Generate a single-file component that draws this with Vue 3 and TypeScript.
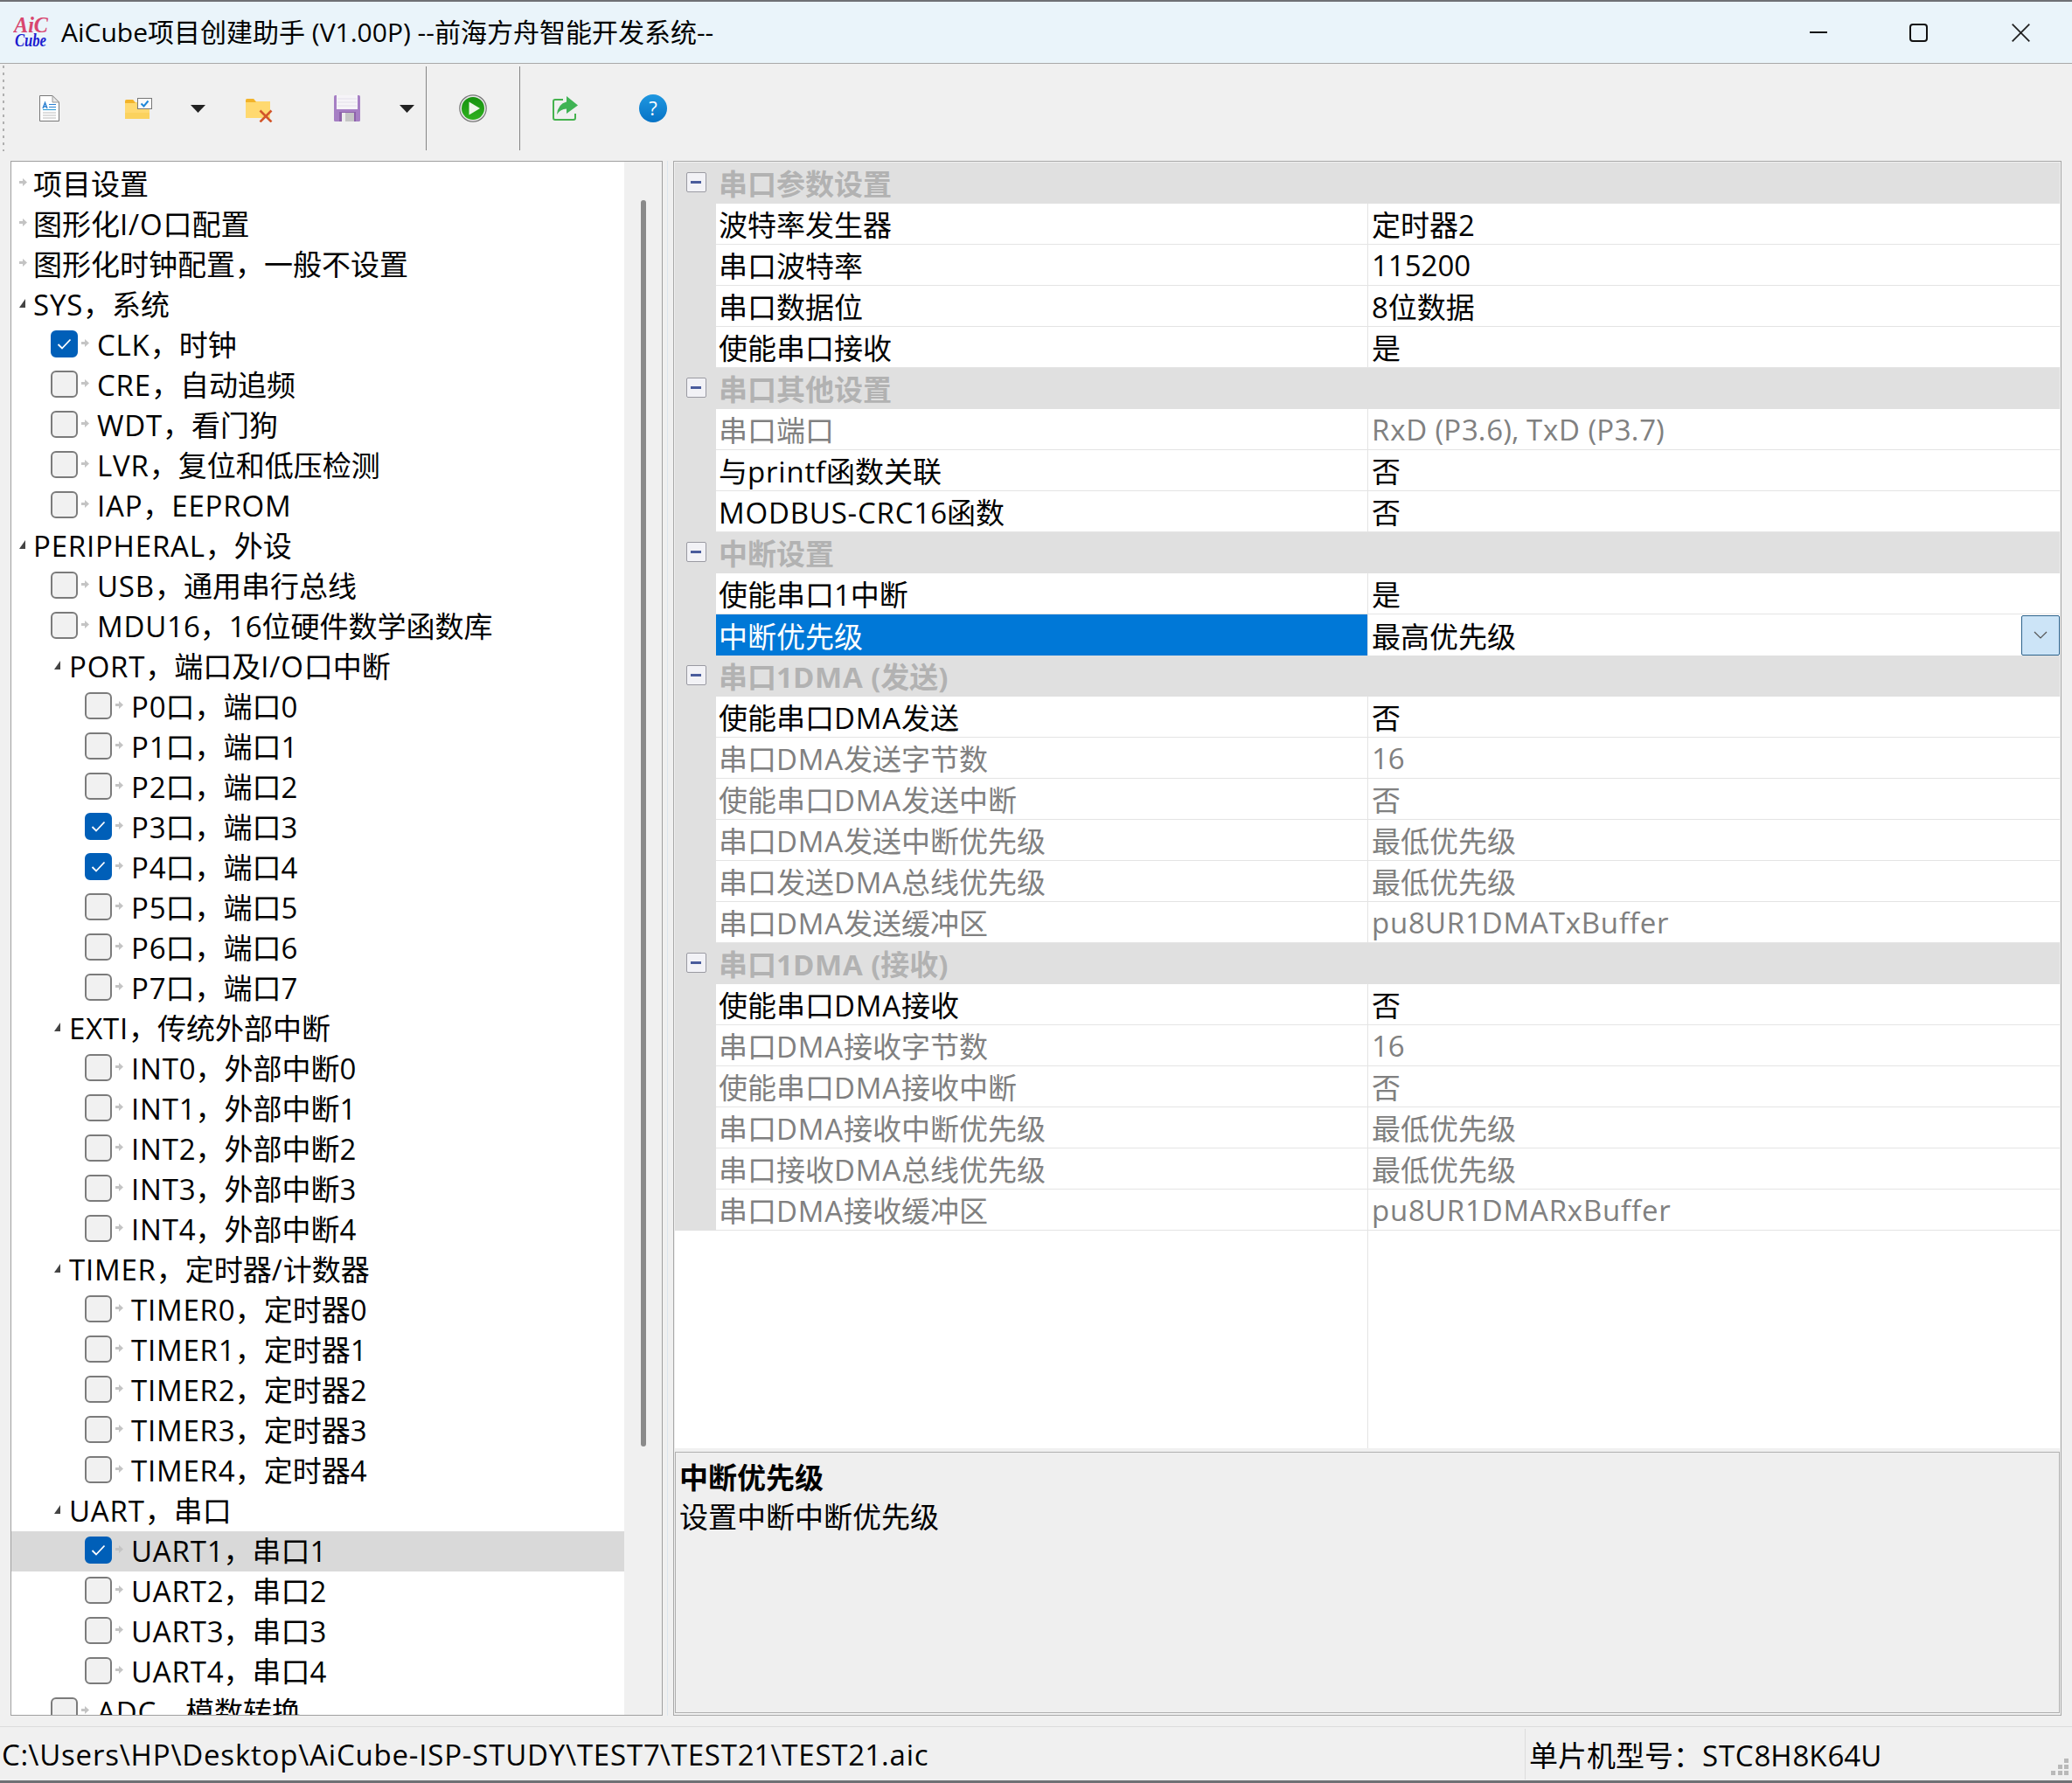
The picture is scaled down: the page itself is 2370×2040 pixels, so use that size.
<script setup lang="ts">
import { h, type FunctionalComponent } from "vue";

interface TreeRow {
  label: string;
  level: number;
  // head = no checkbox, expanded heads get the small dark triangle
  head?: boolean;
  open?: boolean;
  checked?: boolean;
  selected?: boolean;
}

interface PropRow {
  label: string;
  value: string;
  off?: boolean;
  selected?: boolean;
}

interface PropGroup {
  title: string;
  rows: PropRow[];
}

const COMMA = "\uFF0C";
const COLON = "\uFF1A";

// the original UI font sets latin letters a little wider than Open Sans does,
// so letter runs get their own span with some tracking
const Txt: FunctionalComponent<{ text: string }> = (props) =>
  props.text
    .split(/([A-Za-z\-/\\.]+)/)
    .filter((part) => part !== "")
    .map((part) => h("span", { class: /^[A-Za-z\-/\\.]+$/.test(part) ? "lat" : undefined }, part));
Txt.props = ["text"];

function leaves(names: string[], level: number, checked: number[] = []): TreeRow[] {
  return names.map((label, i) => ({ label: label.replace("|", COMMA), level, checked: checked.includes(i) }));
}

function head(label: string, level: number, open = false): TreeRow {
  return { label: label.replace("|", COMMA), level, head: true, open };
}

const tree: TreeRow[] = [
  head("项目设置", 0),
  head("图形化I/O口配置", 0),
  head("图形化时钟配置|一般不设置", 0),
  head("SYS|系统", 0, true),
  ...leaves(["CLK|时钟", "CRE|自动追频", "WDT|看门狗", "LVR|复位和低压检测", "IAP|EEPROM"], 1, [0]),
  head("PERIPHERAL|外设", 0, true),
  ...leaves(["USB|通用串行总线", "MDU16|16位硬件数学函数库"], 1),
  head("PORT|端口及I/O口中断", 1, true),
  ...leaves(
    ["P0口|端口0", "P1口|端口1", "P2口|端口2", "P3口|端口3", "P4口|端口4", "P5口|端口5", "P6口|端口6", "P7口|端口7"],
    2,
    [3, 4]
  ),
  head("EXTI|传统外部中断", 1, true),
  ...leaves(["INT0|外部中断0", "INT1|外部中断1", "INT2|外部中断2", "INT3|外部中断3", "INT4|外部中断4"], 2),
  head("TIMER|定时器/计数器", 1, true),
  ...leaves(["TIMER0|定时器0", "TIMER1|定时器1", "TIMER2|定时器2", "TIMER3|定时器3", "TIMER4|定时器4"], 2),
  head("UART|串口", 1, true),
  { ...leaves(["UART1|串口1"], 2)[0], checked: true, selected: true },
  ...leaves(["UART2|串口2", "UART3|串口3", "UART4|串口4"], 2),
  ...leaves(["ADC|模数转换"], 1),
];

const groups: PropGroup[] = [
  {
    title: "串口参数设置",
    rows: [
      { label: "波特率发生器", value: "定时器2" },
      { label: "串口波特率", value: "115200" },
      { label: "串口数据位", value: "8位数据" },
      { label: "使能串口接收", value: "是" },
    ],
  },
  {
    title: "串口其他设置",
    rows: [
      { label: "串口端口", value: "RxD (P3.6), TxD (P3.7)", off: true },
      { label: "与printf函数关联", value: "否" },
      { label: "MODBUS-CRC16函数", value: "否" },
    ],
  },
  {
    title: "中断设置",
    rows: [
      { label: "使能串口1中断", value: "是" },
      { label: "中断优先级", value: "最高优先级", selected: true },
    ],
  },
  {
    title: "串口1DMA (发送)",
    rows: [
      { label: "使能串口DMA发送", value: "否" },
      { label: "串口DMA发送字节数", value: "16", off: true },
      { label: "使能串口DMA发送中断", value: "否", off: true },
      { label: "串口DMA发送中断优先级", value: "最低优先级", off: true },
      { label: "串口发送DMA总线优先级", value: "最低优先级", off: true },
      { label: "串口DMA发送缓冲区", value: "pu8UR1DMATxBuffer", off: true },
    ],
  },
  {
    title: "串口1DMA (接收)",
    rows: [
      { label: "使能串口DMA接收", value: "否" },
      { label: "串口DMA接收字节数", value: "16", off: true },
      { label: "使能串口DMA接收中断", value: "否", off: true },
      { label: "串口DMA接收中断优先级", value: "最低优先级", off: true },
      { label: "串口接收DMA总线优先级", value: "最低优先级", off: true },
      { label: "串口DMA接收缓冲区", value: "pu8UR1DMARxBuffer", off: true },
    ],
  },
];

const chipText = `单片机型号${COLON}STC8H8K64U`;
</script>

<template>
  <div class="window">
    <header class="titlebar">
      <svg class="logo" width="42" height="46" viewBox="0 -5 42 46">
        <text x="1" y="18" class="logo-aic" textLength="39" lengthAdjust="spacingAndGlyphs">AiC</text>
        <text x="2" y="34" class="logo-cube" textLength="36" lengthAdjust="spacingAndGlyphs">Cube</text>
      </svg>
      <span class="title-text">AiCube项目创建助手 (V1.00P) --前海方舟智能开发系统--</span>
      <div class="window-btns">
        <svg class="win-min" width="20" height="2" viewBox="0 0 20 2"><rect width="20" height="2" fill="#111" /></svg>
        <svg class="win-max" width="21" height="21" viewBox="0 0 21 21"><rect x="1" y="1" width="19" height="19" rx="3" fill="none" stroke="#111" stroke-width="2" /></svg>
        <svg class="win-close" width="21" height="21" viewBox="0 0 21 21"><path d="M.7.7 20.3 20.3M20.3.7.7 20.3" fill="none" stroke="#222" stroke-width="1.8" /></svg>
      </div>
    </header>

    <div class="toolbar">
      <div class="grip"></div>
      <svg class="tb-doc" width="23" height="30" viewBox="0 0 23 30">
        <path d="M.5.5H15L22.5 8V29.5H.5Z" fill="#fff" stroke="#777" />
        <path d="M15 .5V8H22.5Z" fill="#e8e8e8" stroke="#999" />
        <path d="M4 15 6.5 8.5 9 15M5 13H8" fill="none" stroke="#2a7fd0" stroke-width="1.4" />
        <path d="M11 10.5H19M11 13.5H19" stroke="#2a7fd0" stroke-width="1.2" />
        <path d="M4 16.5H19" stroke="#35a0d8" stroke-width="1.2" />
        <path d="M4 20H19M4 23H19M4 26H19" stroke="#bbb" stroke-width="1.2" />
      </svg>
      <svg class="tb-open" width="31" height="25" viewBox="0 0 31 25">
        <path d="M0 4Q0 2 2 2H9L12 5H28V24H0Z" fill="#ffd970" />
        <path d="M0 4Q0 2 2 2H9L12 6H0Z" fill="#f2b32a" />
        <path d="M0 17H28V24H0Z" fill="#fbd25e" />
        <rect x="14.5" y=".5" width="16" height="12" fill="#fafafa" stroke="#777" />
        <path d="M18.5 6.5 21.5 9.5 26.5 3.5" fill="none" stroke="#1e86d8" stroke-width="2" />
      </svg>
      <svg class="tb-arrow-a" width="17" height="9" viewBox="0 0 17 9"><path d="M0 0H17L8.5 9Z" fill="#222" /></svg>
      <svg class="tb-close" width="31" height="27" viewBox="0 0 31 27">
        <path d="M0 2Q0 0 2 0H9L12 3H28V22H0Z" fill="#ffd970" />
        <path d="M0 2Q0 0 2 0H9L12 4H0Z" fill="#f2b32a" />
        <path d="M16.5 13.5 29.5 26.5M29.5 13.5 16.5 26.5" stroke="#d2552a" stroke-width="2.6" />
      </svg>
      <svg class="tb-save" width="30" height="30" viewBox="0 0 30 30">
        <path d="M1.5 0H28.5Q30 0 30 1.5V28.5Q30 30 28.5 30H1.5Q0 30 0 28.5V1.5Q0 0 1.5 0Z" fill="#a67fc4" />
        <rect x="3" y="0" width="24" height="16" fill="#f6f4f8" />
        <path d="M4 4H26M4 8H26M4 12H26" stroke="#e4e0ea" stroke-width="1" />
        <rect x="6" y="19" width="19" height="11" fill="#8d62aa" />
        <rect x="13" y="20" width="10" height="10" fill="#c6c6c6" />
        <rect x="9" y="20" width="4" height="10" fill="#ededed" />
      </svg>
      <svg class="tb-arrow-b" width="17" height="9" viewBox="0 0 17 9"><path d="M0 0H17L8.5 9Z" fill="#222" /></svg>
      <div class="tb-sep tb-sep-a"></div>
      <svg class="tb-run" width="32" height="32" viewBox="0 0 32 32">
        <defs>
          <linearGradient id="runFill" x1="0" y1="0" x2="0" y2="1">
            <stop offset="0" stop-color="#16920f" />
            <stop offset="1" stop-color="#2fb01e" />
          </linearGradient>
        </defs>
        <circle cx="16" cy="16" r="15.2" fill="#e8e8e8" stroke="#777" stroke-width="1.2" />
        <circle cx="16" cy="16" r="13" fill="url(#runFill)" />
        <path d="M11.5 8.5 24 16 11.5 23.5Z" fill="#eef5ea" />
      </svg>
      <div class="tb-sep tb-sep-b"></div>
      <svg class="tb-export" width="29" height="28" viewBox="0 0 29 28">
        <path d="M12 4H3Q1 4 1 6V25Q1 27 3 27H24Q26 27 26 25V20" fill="none" stroke="#45b24e" stroke-width="2" />
        <path d="M16 0 29 10.5 16 20V14.5Q9 14.5 5 21 6 9 16 6.5Z" fill="#3fb354" />
      </svg>
      <svg class="tb-help" width="32" height="32" viewBox="0 0 32 32">
        <defs>
          <linearGradient id="helpFill" x1="0" y1="0" x2="0" y2="1">
            <stop offset="0" stop-color="#1f97e0" />
            <stop offset="1" stop-color="#0673c6" />
          </linearGradient>
        </defs>
        <circle cx="16" cy="16" r="16" fill="url(#helpFill)" />
        <text x="16" y="24" class="help-mark">?</text>
      </svg>
    </div>

    <main class="workspace">
      <section class="tree-panel">
        <div class="tree">
          <div
            v-for="row in tree"
            :key="row.label"
            class="tree-row"
            :class="[`lvl-${row.level}`, { head: row.head, selected: row.selected }]"
          >
            <span v-if="!row.head" class="check" :class="{ on: row.checked }">
              <svg v-if="row.checked" width="17" height="13" viewBox="0 0 17 13">
                <path d="M1.5 7 6 11.5 15.5 1.5" fill="none" stroke="#fff" stroke-width="1.8" />
              </svg>
            </span>
            <span class="twist">
              <svg v-if="row.open" width="7" height="10" viewBox="0 0 7 10"><path d="M7 0V10H0Z" fill="#444" /></svg>
              <svg v-else width="9" height="9" viewBox="0 0 9 9"><path d="M0 3H4V0L9 4.5 4 9V6H0Z" fill="#c4c4c4" /></svg>
            </span>
            <span class="tree-label"><Txt :text="row.label" /></span>
          </div>
        </div>
        <div class="scrollbar"><div class="thumb"></div></div>
      </section>

      <div class="splitter"></div>

      <section class="prop-panel">
        <div class="grid">
          <template v-for="group in groups" :key="group.title">
            <div class="group-row">
              <span class="gutter">
                <span class="collapse"><i></i></span>
              </span>
              <span class="group-title"><Txt :text="group.title" /></span>
            </div>
            <div v-for="row in group.rows" :key="row.label" class="prop-row" :class="{ off: row.off, selected: row.selected }">
              <span class="gutter"></span>
              <span class="prop-label"><span><Txt :text="row.label" /></span></span>
              <span class="prop-value">
                <span><Txt :text="row.value" /></span>
                <span v-if="row.selected" class="drop-btn">
                  <svg width="16" height="9" viewBox="0 0 16 9"><path d="M1 1 8 8 15 1" fill="none" stroke="#555" stroke-width="1.2" /></svg>
                </span>
              </span>
            </div>
          </template>
          <div class="grid-rest"></div>
        </div>
        <div class="help">
          <div class="help-title">中断优先级</div>
          <div class="help-desc">设置中断中断优先级</div>
        </div>
      </section>
    </main>

    <footer class="statusbar">
      <span class="status-path"><Txt text="C:\Users\HP\Desktop\AiCube-ISP-STUDY\TEST7\TEST21\TEST21.aic" /></span>
      <span class="status-chip"><span><Txt :text="chipText" /></span></span>
      <svg class="size-grip" width="20" height="20" viewBox="0 0 20 20">
        <path d="M15 0H20V5H15ZM8 7H13V12H8ZM15 7H20V12H15ZM0 14H5V19H0ZM8 14H13V19H8ZM15 14H20V19H15Z" fill="#b9b9b9" />
      </svg>
    </footer>
  </div>
</template>

<style scoped>
.window {
  position: relative;
  width: 2370px;
  height: 2040px;
  display: flex;
  flex-direction: column;
  background: #f0f0f0;
  overflow: hidden;
  font-family: "Open Sans", "Noto Sans CJK SC", sans-serif;
  font-size: 33px;
  color: #000;
}

.titlebar {
  height: 73px;
  box-sizing: border-box;
  flex: none;
  display: flex;
  align-items: center;
  background: #eaf4fa;
  border-top: 2px solid #6f7074;
  border-bottom: 1px solid #a9a9a9;
}

.logo {
  margin-left: 15px;
  margin-top: -1px;
}

.logo-aic {
  font: italic bold 26px "Liberation Serif", serif;
  fill: #d8466f;
}

.logo-cube {
  font: italic bold 20px "Liberation Serif", serif;
  fill: #1c1cd0;
}

.title-text {
  margin-left: 13px;
  font-size: 30px;
  line-height: 40px;
  white-space: nowrap;
}

.window-btns {
  margin-left: auto;
  display: flex;
  align-items: center;
}

.win-min {
  margin-right: 94px;
}

.win-max {
  margin-right: 96px;
}

.win-close {
  margin-right: 48px;
}

.toolbar {
  height: 111px;
  box-sizing: border-box;
  flex: none;
  display: flex;
  align-items: center;
  padding-left: 3px;
  padding-bottom: 9px;
}

.grip {
  width: 2px;
  height: 98px;
  background: repeating-linear-gradient(to bottom, #b0b0b0 0 3px, transparent 3px 8px);
}

.tb-doc {
  margin-left: 40px;
}

.tb-open {
  margin-left: 75px;
}

.tb-arrow-a {
  margin-left: 44px;
}

.tb-close {
  margin-left: 46px;
  margin-top: 5px;
}

.tb-save {
  margin-left: 70px;
}

.tb-arrow-b {
  margin-left: 45px;
}

.tb-sep {
  width: 1px;
  height: 96px;
  background: #858585;
}

.tb-sep-a {
  margin-left: 13px;
}

.tb-run {
  margin-left: 37px;
}

.tb-sep-b {
  margin-left: 37px;
}

.tb-export {
  margin-left: 37px;
}

.tb-help {
  margin-left: 70px;
}

.help-mark {
  font: 22px "Open Sans", sans-serif;
  fill: #fff;
  text-anchor: middle;
}

.workspace {
  flex: none;
  height: 1779px;
  display: flex;
  padding-left: 12px;
}

.tree-panel {
  width: 746px;
  box-sizing: border-box;
  display: flex;
  border: 1px solid #a0a0a0;
  background: #fff;
  overflow: hidden;
}

.tree {
  flex: 1;
  min-width: 0;
  padding-top: 3px;
}

.tree-row {
  height: 46px;
  display: flex;
  align-items: center;
  white-space: nowrap;
}

.tree-row.selected {
  background: #d9d9d9;
}

.tree-row.lvl-1 {
  padding-left: 45px;
}

.tree-row.lvl-2 {
  padding-left: 84px;
}

.tree-row.head.lvl-0 {
  padding-left: 9px;
}

.tree-row.head.lvl-1 {
  padding-left: 49px;
}

.check {
  width: 31px;
  height: 31px;
  box-sizing: border-box;
  flex: none;
  display: flex;
  align-items: center;
  justify-content: center;
  margin-bottom: 4px;
  border: 2px solid #7b7b7b;
  border-radius: 6px;
  background: #f1f1f1;
}

.check.on {
  border-color: #005fb8;
  background: #005fb8;
}

.twist {
  width: 22px;
  flex: none;
  display: flex;
  align-items: center;
  padding-left: 4px;
  margin-bottom: 5px;
  box-sizing: border-box;
}

.head .twist {
  width: 17px;
  padding-left: 0;
}

.head.lvl-0 .twist {
  width: 16px;
}

.tree-label {
  line-height: 46px;
}

.scrollbar {
  width: 43px;
  flex: none;
  background: #f0f0f0;
  padding: 44px 0 0 19px;
  box-sizing: border-box;
}

.thumb {
  width: 6px;
  height: 1426px;
  border-radius: 3px;
  background: #8a8a8a;
}

.splitter {
  width: 1px;
  margin-left: 5px;
  flex: none;
  background: #dde6ee;
}

.prop-panel {
  width: 1588px;
  box-sizing: border-box;
  margin-left: 6px;
  display: flex;
  flex-direction: column;
  border: 1px solid #a8a8a8;
  padding: 1px 1px 2px 1px;
}

.grid {
  flex: 1;
  min-height: 0;
  display: flex;
  flex-direction: column;
  background: #fff;
}

.group-row,
.prop-row {
  height: 47px;
  flex: none;
  box-sizing: border-box;
  display: flex;
  align-items: center;
}

.group-row {
  background: #e0e0e0;
}

.prop-row {
  border-bottom: 1px solid #e4e4e4;
}

.gutter {
  width: 47px;
  align-self: stretch;
  margin-bottom: -1px;
  flex: none;
  display: flex;
  align-items: center;
  justify-content: center;
  background: #e0e0e0;
}

.group-row .gutter {
  margin-bottom: 0;
}

.collapse {
  width: 23px;
  height: 23px;
  box-sizing: border-box;
  margin-left: 1px;
  margin-top: -3px;
  display: flex;
  align-items: center;
  justify-content: center;
  border: 1px solid #9a9aa2;
  border-radius: 2px;
  background: #f2f2f6;
}

.collapse i {
  width: 12px;
  height: 3px;
  background: #4a5c9c;
}

.group-title {
  padding-left: 3px;
  margin-top: -2px;
  font-weight: 700;
  color: #b2b2b2;
  white-space: nowrap;
}

.prop-label {
  width: 745px;
  height: 100%;
  box-sizing: border-box;
  flex: none;
  display: flex;
  align-items: center;
  padding-left: 3px;
  white-space: nowrap;
}

.prop-value {
  flex: 1;
  min-width: 0;
  height: 100%;
  box-sizing: border-box;
  display: flex;
  align-items: center;
  justify-content: space-between;
  padding-left: 4px;
  border-left: 1px solid #e4e4e4;
  white-space: nowrap;
}

.prop-row.off .prop-label,
.prop-row.off .prop-value {
  color: #808080;
}

.prop-row.selected {
  border-bottom: none;
}

.prop-row.selected .prop-label {
  background: #0078d7;
  color: #fff;
}

.drop-btn {
  width: 44px;
  height: 46px;
  box-sizing: border-box;
  display: flex;
  align-items: center;
  justify-content: center;
  border: 1px solid #2c628b;
  border-radius: 2px;
  background: #cce4f7;
}

.grid-rest {
  flex: 1;
  margin-left: 792px;
  border-left: 1px solid #e4e4e4;
}

.help {
  height: 299px;
  flex: none;
  box-sizing: border-box;
  margin-top: 4px;
  padding: 6px 4px;
  border: 1px solid #b0b0b0;
  background: #efefef;
}

.help-title {
  font-weight: 700;
  line-height: 45px;
}

.help-desc {
  line-height: 45px;
}

.statusbar {
  position: relative;
  flex: none;
  height: 65px;
  box-sizing: border-box;
  margin-top: 12px;
  display: flex;
  align-items: center;
  border-top: 1px solid #dcdcdc;
  border-bottom: 3px solid #6f7074;
  padding-left: 2px;
  padding-top: 1px;
}

.status-path {
  width: 1742px;
  flex: none;
  white-space: nowrap;
}

.status-chip {
  height: 58px;
  display: flex;
  align-items: center;
  padding-left: 4px;
  border-left: 1px solid #dcdcdc;
  white-space: nowrap;
}

.size-grip {
  position: absolute;
  right: 4px;
  bottom: 5px;
}
</style>

<style>
html,
body {
  margin: 0;
  background: #f0f0f0;
}

/* spans made by the Txt helper, scoped styles do not reach them */
.lat {
  letter-spacing: 0.8px;
}
</style>
